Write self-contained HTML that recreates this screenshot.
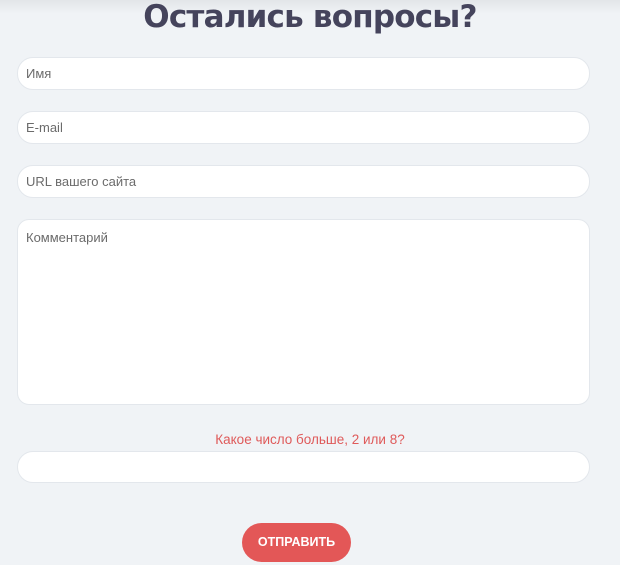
<!DOCTYPE html>
<html><head><meta charset="utf-8"><style>
body{margin:0;width:620px;height:565px;background:#f0f3f6;font-family:"Liberation Sans","DejaVu Sans",sans-serif;position:relative;overflow:hidden}
.top{position:absolute;left:0;top:0;width:620px;height:14px;background:linear-gradient(#e2e5e8,#f0f3f6)}
h1{position:absolute;top:-1px;left:0;width:620px;text-align:center;margin:0;font-size:31px;font-weight:bold;color:#45445c;font-family:"DejaVu Sans",sans-serif;letter-spacing:-0.8px}
.f{position:absolute;left:17px;width:573px;background:#fff;border:1px solid #e3e7ec;border-radius:16px;box-sizing:border-box;font-size:13px;color:#6b6b6b;padding-left:8px;line-height:31px}
.ta{border-radius:12px;line-height:normal;padding-top:10px}
.lbl{position:absolute;top:432px;left:0;width:620px;text-align:center;font-size:13.5px;color:#df5a5a}
.btn{position:absolute;left:242px;top:523px;width:109px;height:39px;border-radius:20px;background:#e35757;color:#fff;font-weight:bold;font-size:12.5px;text-align:center;line-height:39px}
</style></head><body>
<div class="top"></div>
<h1>Остались вопросы?</h1>
<div class="f" style="top:57px;height:33px">Имя</div>
<div class="f" style="top:111px;height:33px">E-mail</div>
<div class="f" style="top:165px;height:33px">URL вашего сайта</div>
<div class="f ta" style="top:219px;height:186px">Комментарий</div>
<div class="lbl">Какое число больше, 2 или 8?</div>
<div class="f" style="top:451px;height:32px"></div>
<div class="btn">ОТПРАВИТЬ</div>
</body></html>
